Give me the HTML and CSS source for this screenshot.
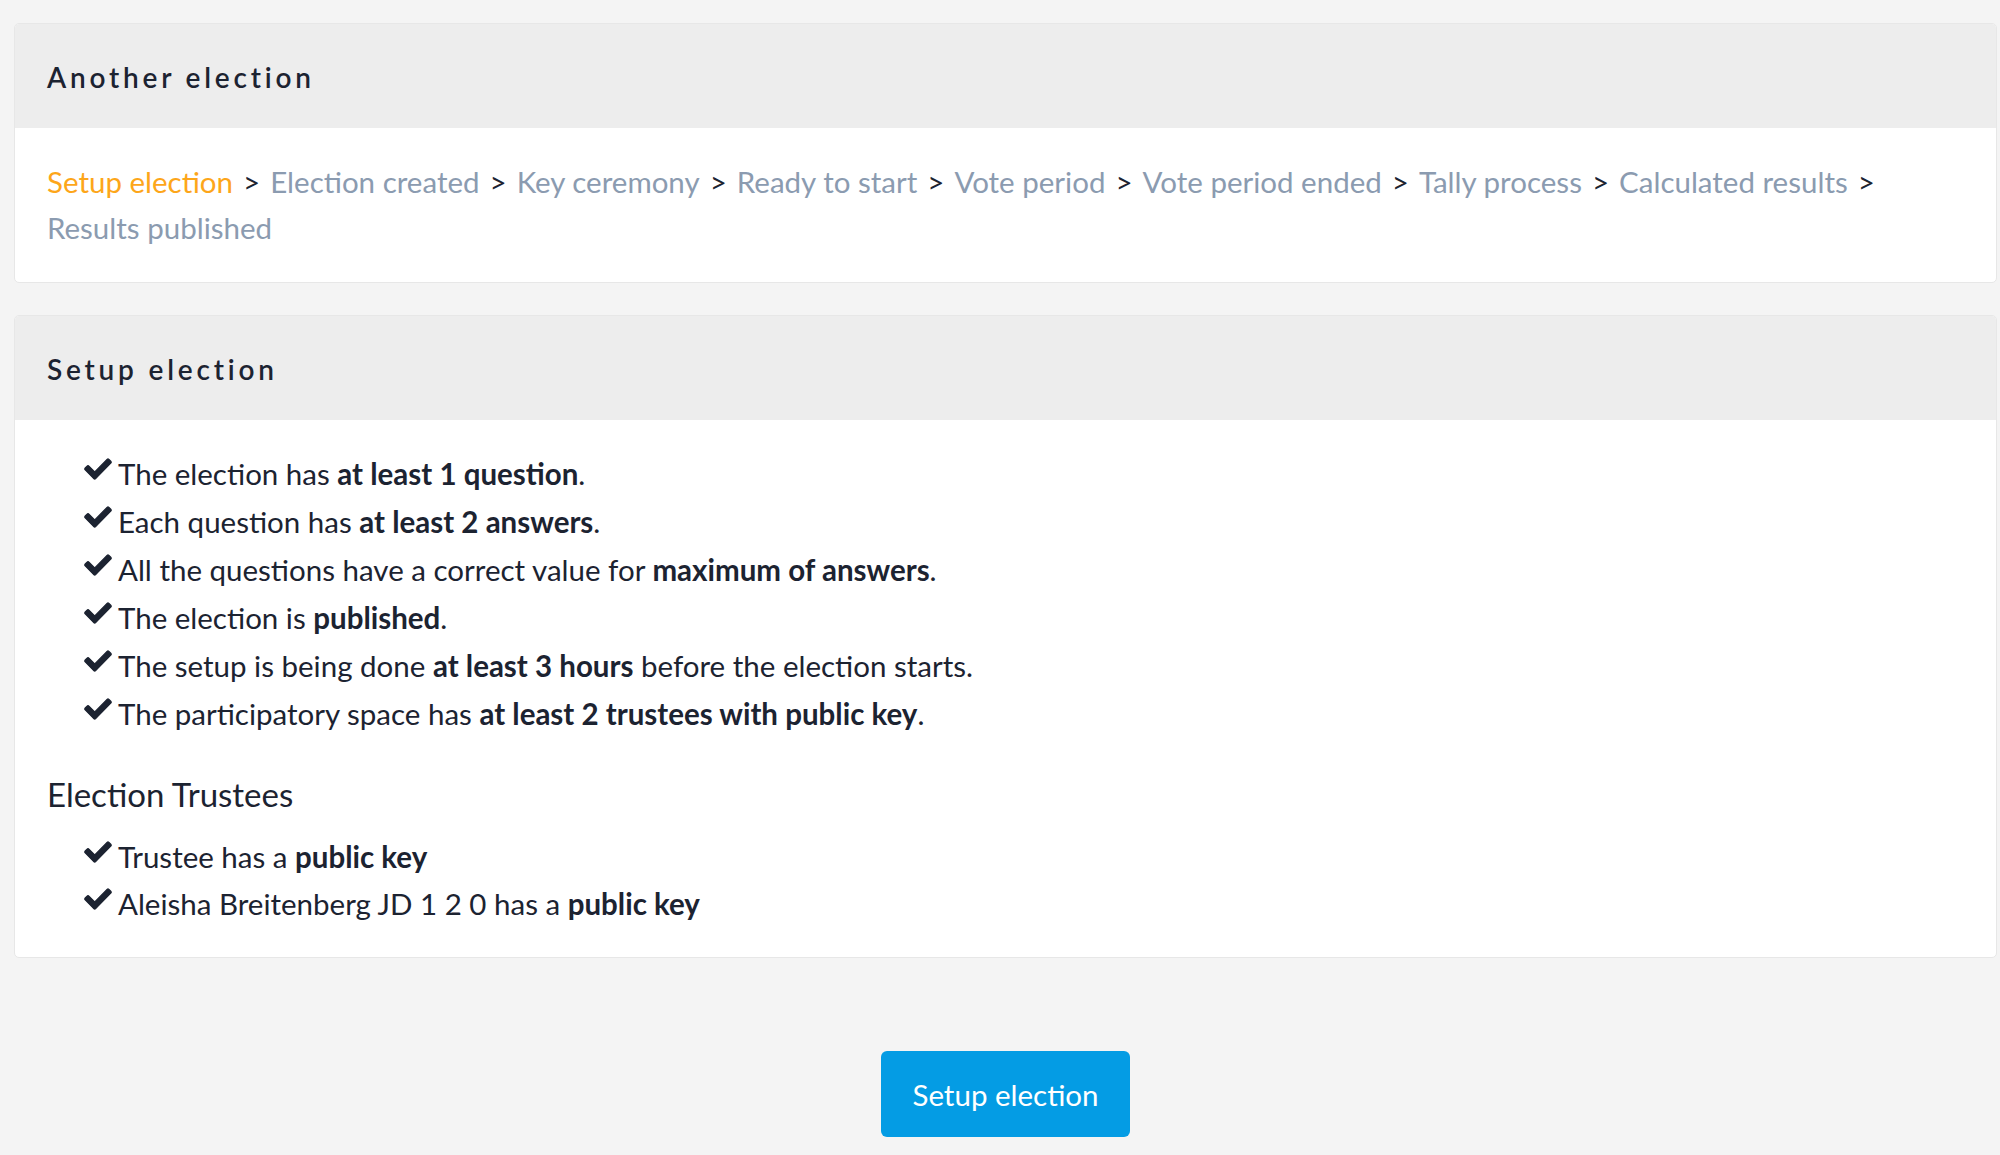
FILE: index.html
```
<!DOCTYPE html>
<html lang="en">
<head>
<meta charset="utf-8">
<title>Setup election</title>
<link rel="stylesheet" href="styles.css">
</head>
<body>
<main class="page">
  <section class="card">
    <header class="card-head"><h2 class="card-title">Another election</h2></header>
    <div class="card-body">
      <nav class="steps">
        <span class="step current">Setup election</span><span class="sep">&gt;</span>
        <span class="step">Election created</span><span class="sep">&gt;</span>
        <span class="step">Key ceremony</span><span class="sep">&gt;</span>
        <span class="step">Ready to start</span><span class="sep">&gt;</span>
        <span class="step">Vote period</span><span class="sep">&gt;</span>
        <span class="step">Vote period ended</span><span class="sep">&gt;</span>
        <span class="step">Tally process</span><span class="sep">&gt;</span>
        <span class="step">Calculated results</span><span class="sep">&gt;</span>
        <span class="step">Results published</span>
      </nav>
    </div>
  </section>

  <section class="card">
    <header class="card-head"><h2 class="card-title">Setup election</h2></header>
    <div class="card-body card-body-list">
      <ul class="checks">
        <li><svg class="check" viewBox="-16 48 544 416" preserveAspectRatio="none"><path d="M173.898 439.404l-166.4-166.4c-9.997-9.997-9.997-26.206 0-36.204l36.203-36.204c9.997-9.998 26.207-9.998 36.204 0L192 312.69 432.095 72.596c9.997-9.997 26.207-9.997 36.204 0l36.203 36.204c9.997 9.997 9.997 26.206 0 36.204l-294.4 294.401c-9.998 9.997-26.207 9.997-36.204-.001z"/></svg><span>The election has <strong>at least 1 question</strong>.</span></li>
        <li><svg class="check" viewBox="-16 48 544 416" preserveAspectRatio="none"><path d="M173.898 439.404l-166.4-166.4c-9.997-9.997-9.997-26.206 0-36.204l36.203-36.204c9.997-9.998 26.207-9.998 36.204 0L192 312.69 432.095 72.596c9.997-9.997 26.207-9.997 36.204 0l36.203 36.204c9.997 9.997 9.997 26.206 0 36.204l-294.4 294.401c-9.998 9.997-26.207 9.997-36.204-.001z"/></svg><span>Each question has <strong>at least 2 answers</strong>.</span></li>
        <li><svg class="check" viewBox="-16 48 544 416" preserveAspectRatio="none"><path d="M173.898 439.404l-166.4-166.4c-9.997-9.997-9.997-26.206 0-36.204l36.203-36.204c9.997-9.998 26.207-9.998 36.204 0L192 312.69 432.095 72.596c9.997-9.997 26.207-9.997 36.204 0l36.203 36.204c9.997 9.997 9.997 26.206 0 36.204l-294.4 294.401c-9.998 9.997-26.207 9.997-36.204-.001z"/></svg><span>All the questions have a correct value for <strong>maximum of answers</strong>.</span></li>
        <li><svg class="check" viewBox="-16 48 544 416" preserveAspectRatio="none"><path d="M173.898 439.404l-166.4-166.4c-9.997-9.997-9.997-26.206 0-36.204l36.203-36.204c9.997-9.998 26.207-9.998 36.204 0L192 312.69 432.095 72.596c9.997-9.997 26.207-9.997 36.204 0l36.203 36.204c9.997 9.997 9.997 26.206 0 36.204l-294.4 294.401c-9.998 9.997-26.207 9.997-36.204-.001z"/></svg><span>The election is <strong>published</strong>.</span></li>
        <li><svg class="check" viewBox="-16 48 544 416" preserveAspectRatio="none"><path d="M173.898 439.404l-166.4-166.4c-9.997-9.997-9.997-26.206 0-36.204l36.203-36.204c9.997-9.998 26.207-9.998 36.204 0L192 312.69 432.095 72.596c9.997-9.997 26.207-9.997 36.204 0l36.203 36.204c9.997 9.997 9.997 26.206 0 36.204l-294.4 294.401c-9.998 9.997-26.207 9.997-36.204-.001z"/></svg><span>The setup is being done <strong>at least 3 hours</strong> before the election starts.</span></li>
        <li><svg class="check" viewBox="-16 48 544 416" preserveAspectRatio="none"><path d="M173.898 439.404l-166.4-166.4c-9.997-9.997-9.997-26.206 0-36.204l36.203-36.204c9.997-9.998 26.207-9.998 36.204 0L192 312.69 432.095 72.596c9.997-9.997 26.207-9.997 36.204 0l36.203 36.204c9.997 9.997 9.997 26.206 0 36.204l-294.4 294.401c-9.998 9.997-26.207 9.997-36.204-.001z"/></svg><span>The participatory space has <strong>at least 2 trustees with public key</strong>.</span></li>
      </ul>
      <h3 class="sub-title">Election Trustees</h3>
      <ul class="checks trustees">
        <li><svg class="check" viewBox="-16 48 544 416" preserveAspectRatio="none"><path d="M173.898 439.404l-166.4-166.4c-9.997-9.997-9.997-26.206 0-36.204l36.203-36.204c9.997-9.998 26.207-9.998 36.204 0L192 312.69 432.095 72.596c9.997-9.997 26.207-9.997 36.204 0l36.203 36.204c9.997 9.997 9.997 26.206 0 36.204l-294.4 294.401c-9.998 9.997-26.207 9.997-36.204-.001z"/></svg><span>Trustee has a <strong>public key</strong></span></li>
        <li><svg class="check" viewBox="-16 48 544 416" preserveAspectRatio="none"><path d="M173.898 439.404l-166.4-166.4c-9.997-9.997-9.997-26.206 0-36.204l36.203-36.204c9.997-9.998 26.207-9.998 36.204 0L192 312.69 432.095 72.596c9.997-9.997 26.207-9.997 36.204 0l36.203 36.204c9.997 9.997 9.997 26.206 0 36.204l-294.4 294.401c-9.998 9.997-26.207 9.997-36.204-.001z"/></svg><span>Aleisha Breitenberg JD 1 2 0 has a <strong>public key</strong></span></li>
      </ul>
    </div>
  </section>

  <div class="actions">
    <button class="btn" type="button">Setup election</button>
  </div>
</main>
</body>
</html>
```
FILE: styles.css
```
html, body {
  margin: 0;
  padding: 0;
}
body {
  background: #f4f4f4;
  font-family: "Lato", "Liberation Sans", sans-serif;
  color: #1c2331;
  font-size: 29.5px;
}
.page {
  display: flex;
  flex-direction: column;
  gap: 32px;
  padding: 23px 3px 0 14px;
}
.card {
  background: #fff;
  border: 1px solid #e7e7e7;
  border-radius: 5px;
  overflow: hidden;
}
.card-head {
  background: #ededed;
  padding: 36px 32px 34px;
}
.card-title {
  margin: 0;
  font-size: 28px;
  line-height: 34px;
  font-weight: 600;
  letter-spacing: 3.8px;
  color: #1c2331;
}
.card-body {
  padding: 31px 32px 31px;
}
.card-body-list {
  padding: 30px 32px 30px;
}
.steps {
  display: flex;
  flex-wrap: wrap;
  line-height: 46px;
  color: #8b9bb0;
}
.step {
  white-space: nowrap;
}
.step.current {
  color: #fda61a;
}
.sep {
  color: #1c2331;
  margin: 0 10px;
}
.checks {
  list-style: none;
  margin: 0;
  padding: 0 0 0 37px;
  line-height: 48px;
}
.checks li {
  display: flex;
  align-items: center;
  gap: 6px;
}
.check {
  width: 28px;
  height: 22px;
  fill: #1c2331;
  stroke: #1c2331;
  stroke-width: 22;
  stroke-linejoin: round;
  flex: none;
  position: relative;
  top: -5px;
}
.checks strong {
  font-weight: 700;
}
.sub-title {
  margin: 32px 0 15px;
  font-size: 33px;
  line-height: 48px;
  font-weight: 400;
}
.trustees {
  line-height: 47px;
}
.actions {
  display: flex;
  justify-content: center;
  padding-top: 61px;
}
.btn {
  font-family: "Lato", "Liberation Sans", sans-serif;
  font-size: 29.5px;
  color: #fff;
  background: #049ce4;
  border: none;
  border-radius: 6px;
  height: 86px;
  padding: 0 31px;
  cursor: pointer;
}
```
